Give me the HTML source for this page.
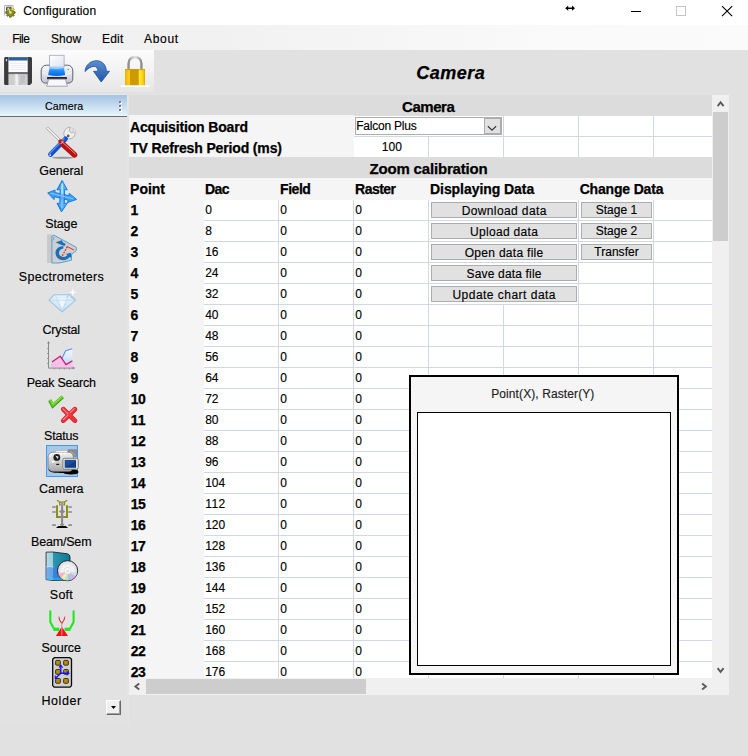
<!DOCTYPE html>
<html lang="en"><head><meta charset="utf-8"><title>Configuration</title>
<style>
html,body{margin:0;padding:0;}
body{width:748px;height:756px;overflow:hidden;background:#e1e1e1;position:relative;font-family:"Liberation Sans",sans-serif;color:#000;}
.r{position:absolute;}
.t{position:absolute;white-space:pre;line-height:1;}
svg{display:block;overflow:visible;}
</style></head><body>
<div class="r" style="left:0px;top:0px;width:748px;height:25px;background:#fff;"></div>
<svg class="r" style="left:3px;top:3px" width="16" height="16" viewBox="0 0 16 16"><path d="M1.500 12.500v-10h8.500v4" fill="#fafafa" stroke="#b4b4b4" stroke-width="1"/><path d="M3.500 7.500v-3.300h5" fill="none" stroke="#4a4a4a" stroke-width="1"/><path d="M12.14 8.74L12.14 10.26L10.76 10.47L10.46 11.19L11.29 12.31L10.21 13.39L9.09 12.56L8.37 12.86L8.16 14.24L6.64 14.24L6.43 12.86L5.71 12.56L4.59 13.39L3.51 12.31L4.34 11.19L4.04 10.47L2.66 10.26L2.66 8.74L4.04 8.53L4.34 7.81L3.51 6.69L4.59 5.61L5.71 6.44L6.43 6.14L6.64 4.76L8.16 4.76L8.37 6.14L9.09 6.44L10.21 5.61L11.29 6.69L10.46 7.81L10.76 8.53z" fill="#8d8d10" stroke="#3a3a06" stroke-width=".6"/><circle cx="7.400" cy="9.500" r="1.400" fill="#d4d4c8"/><path d="M8.500 5.800l2.500 1.300" stroke="#e8e81e" stroke-width="1.600"/><path d="M4 7.200l2.500-.9v2.700" stroke="#d6d6b8" stroke-width=".9" fill="none"/></svg>
<span class="t" style="left:23.30px;top:5px;font-size:12px;letter-spacing:0.117px;-webkit-text-stroke:0.15px #000;">Configuration</span>
<svg class="r" style="left:560px;top:0px" width="188" height="25" viewBox="560 0 188 25">
<path d="M565.200 8.200l3-2.600v1.900h3.800v-1.900l3 2.600-3 2.600v-1.900h-3.800v1.900z" fill="#000"/>
<path d="M631 11.500h10" stroke="#000" stroke-width="1"/>
<rect x="676.500" y="6.500" width="9" height="9" fill="none" stroke="#c4c4c4" stroke-width="1"/>
<path d="M722 6.200l10.200 10M732.200 6.200l-10.200 10" stroke="#000" stroke-width="1.100" fill="none"/>
</svg>
<div class="r" style="left:0px;top:25px;width:748px;height:25px;background:linear-gradient(90deg,#f0f0f0 0%,#f1f1f1 28%,#f9f9f9 70%,#fbfbfb 100%);"></div>
<span class="t" style="left:12.20px;top:33px;font-size:12px;letter-spacing:-0.573px;-webkit-text-stroke:0.15px #000;">File</span>
<span class="t" style="left:50.90px;top:33px;font-size:12px;letter-spacing:0.127px;-webkit-text-stroke:0.15px #000;">Show</span>
<span class="t" style="left:102.00px;top:33px;font-size:12px;letter-spacing:0.213px;-webkit-text-stroke:0.15px #000;">Edit</span>
<span class="t" style="left:144.00px;top:33px;font-size:12px;letter-spacing:0.690px;-webkit-text-stroke:0.15px #000;">About</span>
<div class="r" style="left:0px;top:50px;width:154px;height:42px;background:linear-gradient(180deg,#fcfcfc 0%,#f3f3f3 45%,#e6e6e6 100%);"></div>
<div class="r" style="left:0px;top:94px;width:127px;height:1px;background:#e9e9e9;"></div>
<svg class="r" style="left:0px;top:50px" width="154" height="41" viewBox="0 50 154 41">
<defs>
<linearGradient id="gsh" x1="0" y1="0" x2="1" y2="0"><stop offset="0" stop-color="#d6d6d8"/><stop offset=".45" stop-color="#f6f6fa"/><stop offset="1" stop-color="#a9adb8"/></linearGradient>
<linearGradient id="gpb" x1="0" y1="0" x2="0" y2="1"><stop offset="0" stop-color="#f7f7fb"/><stop offset=".5" stop-color="#e3e3ec"/><stop offset="1" stop-color="#bfc1d0"/></linearGradient>
<linearGradient id="gpbl" x1="0" y1="0" x2="0" y2="1"><stop offset="0" stop-color="#7cc6ff"/><stop offset=".45" stop-color="#1f8cf8"/><stop offset="1" stop-color="#0464ea"/></linearGradient>
<linearGradient id="gpp" x1="0" y1="0" x2="1" y2="1"><stop offset="0" stop-color="#ffffff"/><stop offset="1" stop-color="#dfe2ec"/></linearGradient>
<linearGradient id="gar" x1="0" y1="0" x2="0" y2="1"><stop offset="0" stop-color="#5a8fd0"/><stop offset="1" stop-color="#1f56a8"/></linearGradient>
<linearGradient id="glk" x1="0" y1="0" x2="1" y2="0"><stop offset="0" stop-color="#e8b400"/><stop offset=".22" stop-color="#ffd21a"/><stop offset=".26" stop-color="#cf9a00"/><stop offset=".66" stop-color="#cf9a00"/><stop offset=".72" stop-color="#ffe84a"/><stop offset=".9" stop-color="#ffd000"/><stop offset="1" stop-color="#d8a400"/></linearGradient>
<linearGradient id="gshk" x1="0" y1="0" x2="1" y2="0"><stop offset="0" stop-color="#8e8e8e"/><stop offset=".5" stop-color="#e4e4e4"/><stop offset="1" stop-color="#8e8e8e"/></linearGradient>
</defs>
<!-- floppy -->
<path d="M5.600 57.100h24.900q1.500 0 1.500 1.500v24.400l-2 2h-24.400q-1.500 0-1.500-1.500v-24.900q0-1.500 1.500-1.500z" fill="#3b3b3e"/>
<rect x="8.400" y="57.200" width="19.300" height="15.100" fill="#fcfcfe"/>
<rect x="8.400" y="57.200" width="19.300" height="3.300" fill="#2d5f9d"/>
<path d="M10.200 63.400h15.700M10.200 65.500h15.700M10.200 67.500h15.700M10.200 69.500h15.700" stroke="#e6e9f2" stroke-width=".8"/>
<rect x="8.400" y="72.300" width="19.300" height="1.800" fill="#707072"/>
<rect x="8.400" y="74.100" width="19.300" height="10.900" fill="#cecece"/>
<path d="M14.300 74.100h3.200l3 10.900h-6.200z" fill="url(#gsh)"/>
<rect x="20.400" y="75.300" width="4.500" height="8.200" fill="#c0c0c2"/>
<rect x="5.800" y="59" width="1.300" height="2.200" rx=".5" fill="#dcdcdc"/>
<!-- printer -->
<path d="M46.500 65.200h21c3.500 0 5.300 2.700 5.300 5.700v7.500c0 2.800-1.600 4.700-4.200 4.700h-23.200c-2.600 0-4.200-1.900-4.200-4.700v-7.500c0-3 1.800-5.700 5.300-5.700z" fill="url(#gpb)" stroke="#5f6172" stroke-width="1"/>
<path d="M42 72.500c4 1.800 9 2.700 15 2.700s11-.9 15-2.700" fill="none" stroke="#fff" stroke-width=".8" opacity=".7"/>
<rect x="49.600" y="55.300" width="14.500" height="12" fill="url(#gpp)" stroke="#a3a7ba" stroke-width=".8"/>
<path d="M49.800 66.800h14l1.400 8.200c-5.500 1.300-11.500 1.300-17.100 0z" fill="url(#gpbl)"/>
<path d="M49.500 68c4.500 1.500 10 1.500 14.600-.2l.2-1h-14.500z" fill="#c6e8ff" opacity=".55"/>
<rect x="47" y="77" width="19.900" height="2.300" rx=".6" fill="#26262a"/>
<path d="M48.600 79.200h16.900l1.900 7h-20.700z" fill="#f8f8fb" stroke="#8e91a0" stroke-width=".8"/>
<rect x="67.400" y="68.800" width="1.500" height="1.200" fill="#2cc46a"/>
<!-- redo arrow -->
<path d="M85 71.500c.5-6.500 5.500-10.800 11.500-10.800 6 0 9.800 4.500 9.800 10.600h3.200l-8.300 10.700-7.700-10.700h4.400c0-3-1.500-4.900-3.800-4.900-2.600 0-6 1.800-9.100 5.100z" fill="url(#gar)" stroke="#1d4f9c" stroke-width=".8"/>
<!-- lock -->
<path d="M120.500 86.200h29.300" stroke="#fff" stroke-width="1.600"/>
<path d="M128.600 70v-6.300c0-4 2.700-6.500 6.400-6.500s6.400 2.500 6.400 6.500v6.300" fill="none" stroke="url(#gshk)" stroke-width="2.500"/>
<rect x="125" y="69.200" width="20" height="16" fill="url(#glk)"/>
<rect x="125" y="69.200" width="20" height="1" fill="#b98a00" opacity=".6"/>
</svg>
<span class="t" style="left:416.20px;top:64px;font-size:18px;letter-spacing:0.488px;font-weight:bold;font-style:italic;-webkit-text-stroke:0.25px #000;">Camera</span>
<div class="r" style="left:0px;top:95px;width:127px;height:630px;background:#e2e2e2;"></div>
<div class="r" style="left:127px;top:95px;width:2px;height:630px;background:#e4e4e4;"></div>
<div class="r" style="left:0px;top:95px;width:127px;height:21px;background:linear-gradient(180deg,#a3c2e3 0%,#c6dcef 50%,#e6f6fc 100%);"></div>
<div class="r" style="left:0px;top:116px;width:127px;height:1px;background:#6e6e6e;"></div>
<span class="t" style="left:45.10px;top:101px;font-size:10.6px;letter-spacing:0.093px;-webkit-text-stroke:0.15px #000;">Camera</span>
<div class="r" style="left:120px;top:102px;width:2px;height:2px;background:#fff;"></div>
<div class="r" style="left:119px;top:101px;width:2px;height:2px;background:#808080;"></div>
<div class="r" style="left:120px;top:106px;width:2px;height:2px;background:#fff;"></div>
<div class="r" style="left:119px;top:105px;width:2px;height:2px;background:#808080;"></div>
<div class="r" style="left:120px;top:110px;width:2px;height:2px;background:#fff;"></div>
<div class="r" style="left:119px;top:109px;width:2px;height:2px;background:#808080;"></div>
<span class="t" style="left:39.35px;top:165px;font-size:12.5px;letter-spacing:-0.100px;-webkit-text-stroke:0.15px #000;">General</span>
<span class="t" style="left:45.30px;top:218px;font-size:12.5px;letter-spacing:-0.156px;-webkit-text-stroke:0.15px #000;">Stage</span>
<span class="t" style="left:18.80px;top:271px;font-size:12.5px;letter-spacing:0.312px;-webkit-text-stroke:0.15px #000;">Spectrometers</span>
<span class="t" style="left:42.50px;top:324px;font-size:12.5px;letter-spacing:-0.212px;-webkit-text-stroke:0.15px #000;">Crystal</span>
<span class="t" style="left:26.65px;top:377px;font-size:12.5px;letter-spacing:-0.233px;-webkit-text-stroke:0.15px #000;">Peak Search</span>
<span class="t" style="left:44.05px;top:430px;font-size:12.5px;letter-spacing:-0.175px;-webkit-text-stroke:0.15px #000;">Status</span>
<span class="t" style="left:39.05px;top:483px;font-size:12.5px;-webkit-text-stroke:0.15px #000;">Camera</span>
<span class="t" style="left:31.00px;top:536px;font-size:12.5px;letter-spacing:-0.182px;-webkit-text-stroke:0.15px #000;">Beam/Sem</span>
<span class="t" style="left:49.85px;top:589px;font-size:12.5px;letter-spacing:0.217px;-webkit-text-stroke:0.15px #000;">Soft</span>
<span class="t" style="left:41.55px;top:642px;font-size:12.5px;letter-spacing:-0.025px;-webkit-text-stroke:0.15px #000;">Source</span>
<span class="t" style="left:41.45px;top:695px;font-size:12.5px;letter-spacing:0.565px;-webkit-text-stroke:0.15px #000;">Holder</span>
<div class="r" style="left:46px;top:445px;width:32px;height:32px;background:#a9c6e4;border:1px solid #3b9bff;box-sizing:border-box;"></div>
<svg class="r" style="left:40px;top:120px" width="48" height="580" viewBox="40 120 48 580">
<defs>
<linearGradient id="s1" x1="0" y1="0" x2="1" y2="1"><stop offset="0" stop-color="#6cb6ff"/><stop offset="1" stop-color="#0a63d8"/></linearGradient>
<linearGradient id="sbx" x1="0" y1="0" x2="1" y2="0"><stop offset="0" stop-color="#9fd2e0"/><stop offset=".29" stop-color="#7cc0d2"/><stop offset=".3" stop-color="#2f95ae"/><stop offset="1" stop-color="#0c7a96"/></linearGradient>
<linearGradient id="sbx2" x1="0" y1="0" x2="1" y2="0"><stop offset="0" stop-color="#4a98ea"/><stop offset=".3" stop-color="#3b86de"/><stop offset="1" stop-color="#1f62c4"/></linearGradient>
<radialGradient id="scd" cx=".5" cy=".5" r=".5"><stop offset="0" stop-color="#ffffff"/><stop offset=".6" stop-color="#f1eff2"/><stop offset="1" stop-color="#d6dae2"/></radialGradient>
<linearGradient id="scam" x1="0" y1="0" x2="0" y2="1"><stop offset="0" stop-color="#f2f2f2"/><stop offset="1" stop-color="#a9a9a9"/></linearGradient>
<linearGradient id="sdia" x1="0" y1="0" x2="0" y2="1"><stop offset="0" stop-color="#e6f1fa"/><stop offset="1" stop-color="#c9e0f3"/></linearGradient>
<linearGradient id="spk" x1="0" y1="0" x2="0" y2="1"><stop offset="0" stop-color="#f6f9ff"/><stop offset=".45" stop-color="#dbe8fd"/><stop offset="1" stop-color="#a9ccf9"/></linearGradient>
</defs>
<g transform="translate(0.2,0.6)">
<ellipse cx="62.500" cy="157.200" rx="10.500" ry="1" fill="#7d7d7d" opacity=".75"/>
<path d="M66.200 137.800c-2.400-1.500-3.300-4.600-2-7.400 1.100-2.400 3.500-3.900 6-3.800l-1.300 3.600 2.300 2 3.500-1.700c.6 2 .1 4.300-1.400 5.900-1.800 2-4.700 2.500-7.100 1.400z" fill="#eeeeee" stroke="#a2a2a2" stroke-width=".8"/>
<path d="M72.600 127.300c1.500.6 2.500 2 2.700 3.500l-2.200 1.900z" fill="#e6e6e6" stroke="#b9b9b9" stroke-width=".5"/>
<circle cx="68" cy="135.300" r="1.300" fill="#5a5a5a"/>
<path d="M50.300 153.900l15-15.700" stroke="#1252cc" stroke-width="4.800" stroke-linecap="round"/>
<path d="M49.600 152.800l14.300-14.900" stroke="#5d97ee" stroke-width="1.300" stroke-linecap="round"/>
<circle cx="50" cy="154.500" r=".9" fill="#e8f0ff"/>
<path d="M47.300 127.700l12.800 12.500" stroke="#9a9a9a" stroke-width="2.600" stroke-linecap="round"/><path d="M47.300 127.700l12.800 12.500" stroke="#fbfbfb" stroke-width="1.500" stroke-linecap="round"/>
<path d="M60.200 140.800l2.800 2.600" stroke="#c81818" stroke-width="4.200" stroke-linecap="round"/>
<path d="M63 144l11.300 10.200" stroke="#b81212" stroke-width="5.600" stroke-linecap="round"/>
<path d="M61.500 141l13.700 12.300" stroke="#f4a0a0" stroke-width=".9" stroke-linecap="round"/>
<path d="M60.600 143.300l2.700-3" stroke="#f6dada" stroke-width="1" />
</g>
<path d="M47.700 192.900l7.400-2.900-.2 2.500 14.200 3.200.100-2.400 7.400 6.100-9 3.200.5-2.500-13.700-3.400-.3 2.900z" fill="#3d9bf0" stroke="#1380e6" stroke-width="1" stroke-linejoin="round"/>
<path d="M62.100 180.400l5.200 9.500-2.700-.3-.3 13.800 3-.2-5.800 8.700-4.500-8.700 2.800.2.400-13.800-3.200.3z" fill="#52aaf4" stroke="#1380e6" stroke-width="1" stroke-linejoin="round"/>
<path d="M62.200 184v9.500" stroke="#b5defa" stroke-width="2" stroke-linecap="round"/><path d="M61.900 200v7.500" stroke="#8cc8f8" stroke-width="1.200" stroke-linecap="round"/>
<path d="M51 193.300l22 5.400" stroke="#8cc8f8" stroke-width="1.100" stroke-linecap="round"/>
<path d="M57 190l4.500-7.500M57.500 203.500l3.500 6" stroke="#1278e0" stroke-width=".8"/>
<path d="M47.100 234.400h4.800v28.600h-4.800z" fill="#c9c9c9"/>
<path d="M51.900 236.200l1.800-1.200 22.600 12.300v3.300l-4.800 4v5.600l-12.200 2.800h-7.400z" fill="#cfcfcf" stroke="#5a9fd0" stroke-width="1"/>
<path d="M52.300 240.500c1.300-.4 1.800-1.500 1.500-3.500" fill="none" stroke="#5a9fd0" stroke-width=".9"/>
<path d="M55.600 242.300l6.200-2 1.200 2.300 2.800 1.500-1.400 1.900-3.600-1.300z" fill="#1670bc"/>
<path d="M63.500 246.300c-4.600-.6-8 2.600-8 6.600 0 4.200 3.500 7.300 7.800 7.300 2.700 0 5-1.200 6.300-3.200l1.400 1.100.200-5.300-5.300 1.200 1.600 1.100c-.9 1.200-2.300 1.900-4 1.900-2.600 0-4.500-1.800-4.500-4.300 0-2.300 1.800-4 4.200-4.300z" fill="#1670bc"/>
<path d="M67.300 246.600l-6.800 12.800" stroke="#e41a1a" stroke-width="1.100" stroke-dasharray="1.800 1.100"/><path d="M67.300 246.600l6.700 3.500" stroke="#e41a1a" stroke-width=".9"/>
<path d="M49 300.100l5-5.300h16.200l5.400 5.300-13.500 11.800z" fill="url(#sdia)" stroke="#9cc3e6" stroke-width="1.100" stroke-linejoin="round"/>
<path d="M57 298.500l5.200 11 4.600-11z" fill="#f3f9fd" opacity=".8"/>
<path d="M50.500 300.200h23.500M55.500 295.500l2.300 4.700 4.300 10.500 4.300-10.500 2.500-4.700" fill="none" stroke="#b9d6ee" stroke-width=".7"/>
<path d="M66.500 297.500l3.500-4M70 296.500l4.500 3.200" stroke="#a5c6e6" stroke-width="1"/>
<path d="M72.700 288.300l.9 3.200 3.400.8-3.400.9-.9 3.300-.9-3.300-3.300-.9 3.300-.8z" fill="#fff" opacity=".9"/>
<path d="M51.600 364.900l8.900-1.900 1.600-4.900 3.600-7.300 6.600-2v19.300h-20.700z" fill="url(#spk)"/>
<path d="M51.600 364.900l8.900-1.900 1.600-4.900 3.600-7.300 6.600-2" fill="none" stroke="#5a8ff0" stroke-width="1.100" stroke-linejoin="round"/>
<path d="M51.900 362l8.300-5.800 5.800 8.400 6.400-3.900v7.400h-20.500z" fill="#fbc0ea"/>
<path d="M51.900 364.900l8.600-1.900" stroke="#d9c6f2" stroke-width=".9"/>
<path d="M51.900 362l8.300-5.800 5.800 8.400 6.400-3.900" fill="none" stroke="#c4206c" stroke-width="1.300" stroke-linejoin="round"/>
<path d="M48.500 342.500v25.600h25.500" fill="none" stroke="#8a8a8a" stroke-width="1"/><path d="M48.500 341l-1.500 2.600h3zM75.300 368.100l-2.600-1.500v3z" fill="#8a8a8a"/>
<path d="M47 348.500h1.500M47 353.500h1.500M47 358.500h1.500M47 363.500h1.500M54.300 368.100v1.500M59.500 368.100v1.500M64.400 368.100v1.500M69.500 368.100v1.500" stroke="#8a8a8a" stroke-width=".8"/>
<path d="M49.800 400.300l3 5.600 9.900-8.900" fill="none" stroke="#3f9c12" stroke-width="3.600" stroke-linejoin="miter"/>
<path d="M49.800 399.900l3 5.300 9.800-8.600" fill="none" stroke="#62cc22" stroke-width="2.600" stroke-linejoin="miter"/>
<path d="M51 400.800l2.200 3.600 8.500-7.600" fill="none" stroke="#a4ea6a" stroke-width=".8"/>
<path d="M63.300 409.200l11.600 11.400M74.900 409.200l-11.600 11.400" stroke="#cc1820" stroke-width="4.700" stroke-linecap="round"/>
<path d="M63.300 409l11.500 11.300M74.800 409l-11.500 11.300" stroke="#f0323a" stroke-width="3.700" stroke-linecap="round"/>
<path d="M63 408.900l5 5M74.200 408.600l-4 4M63.500 419.500l4.200-4.200" stroke="#ff8a90" stroke-width="1.100" stroke-linecap="round"/>
<path d="M48.200 469c1 3 4 3.600 8 3.800 3 .2 5 .2 7.500.3 1 1 3 1.300 7 1.300 4 0 7.500-.5 7.800-2.200.2-1.600-1.800-2.600-4.500-2.800z" fill="#000"/>
<path d="M68.200 449.800h8.600v6.600h-8.600z" fill="#8c8c8c" stroke="#767676" stroke-width=".6"/><path d="M70 451l5.500 4.500" stroke="#b5b5b5" stroke-width=".8"/>
<rect x="48.100" y="452.300" width="25.200" height="19" rx="4.500" fill="url(#scam)" stroke="#7f7f7f" stroke-width=".8"/>
<path d="M56.400 450.700h10.400l1.200 1.900h-12.800z" fill="#fbfbfb" stroke="#9a9a9a" stroke-width=".4"/>
<path d="M50 457c0-2.300 1.500-3.600 4-3.600h13" fill="none" stroke="#fff" stroke-width="1.300" opacity=".9"/>
<circle cx="56.800" cy="457.400" r="3.400" fill="#1e1e1e"/><path d="M55.200 455.500l3.400 1.200-.8 2.200z" fill="#f4f4f4"/>
<rect x="56.200" y="463.700" width="3" height="1.400" rx=".5" fill="#1a1a1a"/>
<rect x="51.500" y="461" width="3.500" height="1.500" rx=".7" fill="#fafafa"/>
<rect x="62.900" y="458.300" width="15.400" height="10.800" rx="1.400" fill="#e3e3e3" stroke="#6e6e6e" stroke-width=".8"/><rect x="64.700" y="459.900" width="11.300" height="7.700" fill="#1d4c9a"/><path d="M64.700 467.600l11.300-6.500v6.500z" fill="#143c80"/>
<path d="M57 500.200l3 2h4.200l3-2" fill="none" stroke="#8c8a12" stroke-width="1.300"/><path d="M59.600 502v3.500M64.600 502v3.500" stroke="#8c8a12" stroke-width="1.100"/>
<circle cx="62.100" cy="504.600" r="1.900" fill="#9c9c9c"/>
<path d="M57 505.200v11.800h3.600M67 505.200v11.800h-3.200" fill="none" stroke="#8c8a12" stroke-width="1.900"/>
<path d="M52.200 507h3.600M68.300 507h3.600M52.200 512h3.600M68.300 512h3.600M52.200 525.100h3.600M68.300 525.100h3.600" stroke="#8a8a8a" stroke-width="1.700"/>
<path d="M62.100 506v19.800" stroke="#8a8a8a" stroke-width="2"/><path d="M62.100 509.200l3.200 2.400-3.200 2.400-3.200-2.400z" fill="#8a8a8a"/><path d="M62.100 514.300l3.300 3.600h-6.600z" fill="#8a8a8a"/><ellipse cx="62.100" cy="524.600" rx="2.300" ry=".9" fill="#8a8a8a"/>
<path d="M56 528l2.200-1.900h7.600l2.200 1.900z" fill="#000"/>
<path d="M46.100 552.200l7-.2 14.400 1.800q2.500.7 2.500 3.200v23l-17 .5-6.900-.900z" fill="url(#sbx)" stroke="#101820" stroke-width=".8" stroke-linejoin="round"/>
<path d="M46.500 567c2.500-.6 5-.6 7 0 5-.2 9-1.300 16.100-3.500v16.300l-16.600.4-6.500-.8z" fill="url(#sbx2)"/>
<path d="M46.500 579.300l6.500.8 16.600-.4v-2.200l-16.600.6-6.500-1z" fill="#1eb0e6" opacity=".8"/>
<path d="M46.500 552.600l6.500-.2v27.700l-6.500-.8z" fill="#fff" opacity=".22"/>
<path d="M46.500 567c2.500-.6 5-.6 7 0" stroke="#e8f6fb" stroke-width=".7" fill="none"/>
<circle cx="67.600" cy="570.700" r="10.100" fill="url(#scd)" stroke="#1a1a1a" stroke-width=".9"/>
<path d="M67.600 570.700l-9.300 3.300a10 10 0 0 0 2.600 4.200z" fill="#f4a6b6" opacity=".75"/><path d="M67.600 570.700l-6.700 7.500a10 10 0 0 0 3.800 2.100z" fill="#f3e9a8" opacity=".7"/><path d="M67.600 570.700l-2.900 9.600a10 10 0 0 0 3.600.3z" fill="#a9e2a4" opacity=".7"/><path d="M67.600 570.700l.7 9.900a10 10 0 0 0 3.500-.9z" fill="#8fb6f0" opacity=".8"/><path d="M67.600 570.700l4.200 9a10 10 0 0 0 4-3.400z" fill="#d79ae0" opacity=".75"/><path d="M67.600 570.700l8.200 5.600a10 10 0 0 0 1.500-3.600z" fill="#b9e2e6" opacity=".7"/>
<circle cx="67.600" cy="570.700" r="3.400" fill="#fafafa" stroke="#cfcfcf" stroke-width=".6"/><circle cx="67.600" cy="570.900" r="1.500" fill="#dedede"/>
<path d="M50.300 610.600v11.300l3.500 6.700" fill="none" stroke="#1ee81e" stroke-width="2.100" stroke-linejoin="round"/><path d="M53.300 629.300h6" stroke="#1ee81e" stroke-width="3.200"/>
<path d="M73.600 610.600v11.300l-3.500 6.700" fill="none" stroke="#1ee81e" stroke-width="2.100" stroke-linejoin="round"/><path d="M70.600 629.300h-6" stroke="#1ee81e" stroke-width="3.200"/>
<path d="M55.800 635.900l6-9.200 6.200 9.200z" fill="#f21010"/>
<path d="M58.700 616.200c.2 3 1.200 5.200 3.100 7.200 1.900-2 2.900-4.200 3.100-7.200" fill="none" stroke="#d62a2a" stroke-width="1.100"/><path d="M58.700 616.400v1M64.900 616.400v1" stroke="#fff" stroke-width="1"/><path d="M61.800 623v12.500" stroke="#cf9c9c" stroke-width="1"/>
<path d="M54.300 657.700h15.600l1.600 1.600v26.300l-1.600 1.600h-15.600l-1.600-1.600v-26.300z" fill="#cfcfcf" stroke="#0a0a0a" stroke-width="1.300" stroke-linejoin="round"/>
<rect x="55.6" y="660.4" width="4.800" height="4.800" rx="1" fill="#b48a0a" stroke="#1c1400" stroke-width=".8"/>
<rect x="55.6" y="669.5" width="4.800" height="4.800" rx="1" fill="#b48a0a" stroke="#1c1400" stroke-width=".8"/>
<rect x="55.6" y="678.5" width="4.800" height="4.800" rx="1" fill="#b48a0a" stroke="#1c1400" stroke-width=".8"/>
<rect x="63.6" y="660.4" width="4.800" height="4.800" rx="1" fill="#b48a0a" stroke="#1c1400" stroke-width=".8"/>
<rect x="63.6" y="669.5" width="4.800" height="4.800" rx="1" fill="#b48a0a" stroke="#1c1400" stroke-width=".8"/>
<rect x="63.6" y="678.5" width="4.800" height="4.800" rx="1" fill="#b48a0a" stroke="#1c1400" stroke-width=".8"/>
<path d="M60.800 673.300v-7.500M60.800 673.300h7.500M60.800 673.300l-5 4.600" stroke="#1212ff" stroke-width="1.400" fill="none"/><path d="M59 667.600l1.800-2.400 1.800 2.400M66.600 671.400l2.400 1.900-2.400 1.900M55.300 675.600v2.800h2.800" stroke="#1212ff" stroke-width="1.100" fill="none"/>
</svg>
<div class="r" style="left:106px;top:700px;width:15px;height:15px;background:#f0f0f0;box-sizing:border-box;border-top:1px solid #fff;border-left:1px solid #fff;border-right:1px solid #696969;border-bottom:1px solid #696969;box-shadow:inset -1px -1px 0 #a0a0a0;"></div>
<svg class="r" style="left:111px;top:706px" width="5" height="3"><path d="M0 0h5L2.500 3z" fill="#000"/></svg>
<div class="r" style="left:129px;top:95px;width:600px;height:600px;background:#fff;"></div>
<div class="r" style="left:278px;top:116px;width:1px;height:563px;background:#d0d7e5;"></div>
<div class="r" style="left:353px;top:116px;width:1px;height:563px;background:#d0d7e5;"></div>
<div class="r" style="left:428px;top:137px;width:1px;height:542px;background:#d0d7e5;"></div>
<div class="r" style="left:503px;top:116px;width:1px;height:84px;background:#d0d7e5;"></div>
<div class="r" style="left:503px;top:304px;width:1px;height:375px;background:#d0d7e5;"></div>
<div class="r" style="left:578px;top:116px;width:1px;height:563px;background:#d0d7e5;"></div>
<div class="r" style="left:653px;top:116px;width:1px;height:563px;background:#d0d7e5;"></div>
<div class="r" style="left:354px;top:136px;width:358px;height:1px;background:#d0d7e5;"></div>
<div class="r" style="left:354px;top:157px;width:358px;height:1px;background:#d0d7e5;"></div>
<div class="r" style="left:354px;top:178px;width:358px;height:1px;background:#d0d7e5;"></div>
<div class="r" style="left:354px;top:199px;width:358px;height:1px;background:#d0d7e5;"></div>
<div class="r" style="left:204px;top:220px;width:508px;height:1px;background:#d0d7e5;"></div>
<div class="r" style="left:204px;top:241px;width:508px;height:1px;background:#d0d7e5;"></div>
<div class="r" style="left:204px;top:262px;width:508px;height:1px;background:#d0d7e5;"></div>
<div class="r" style="left:204px;top:283px;width:508px;height:1px;background:#d0d7e5;"></div>
<div class="r" style="left:204px;top:304px;width:508px;height:1px;background:#d0d7e5;"></div>
<div class="r" style="left:204px;top:325px;width:508px;height:1px;background:#d0d7e5;"></div>
<div class="r" style="left:204px;top:346px;width:508px;height:1px;background:#d0d7e5;"></div>
<div class="r" style="left:204px;top:367px;width:508px;height:1px;background:#d0d7e5;"></div>
<div class="r" style="left:204px;top:388px;width:508px;height:1px;background:#d0d7e5;"></div>
<div class="r" style="left:204px;top:409px;width:508px;height:1px;background:#d0d7e5;"></div>
<div class="r" style="left:204px;top:430px;width:508px;height:1px;background:#d0d7e5;"></div>
<div class="r" style="left:204px;top:451px;width:508px;height:1px;background:#d0d7e5;"></div>
<div class="r" style="left:204px;top:472px;width:508px;height:1px;background:#d0d7e5;"></div>
<div class="r" style="left:204px;top:493px;width:508px;height:1px;background:#d0d7e5;"></div>
<div class="r" style="left:204px;top:514px;width:508px;height:1px;background:#d0d7e5;"></div>
<div class="r" style="left:204px;top:535px;width:508px;height:1px;background:#d0d7e5;"></div>
<div class="r" style="left:204px;top:556px;width:508px;height:1px;background:#d0d7e5;"></div>
<div class="r" style="left:204px;top:577px;width:508px;height:1px;background:#d0d7e5;"></div>
<div class="r" style="left:204px;top:598px;width:508px;height:1px;background:#d0d7e5;"></div>
<div class="r" style="left:204px;top:619px;width:508px;height:1px;background:#d0d7e5;"></div>
<div class="r" style="left:204px;top:640px;width:508px;height:1px;background:#d0d7e5;"></div>
<div class="r" style="left:204px;top:661px;width:508px;height:1px;background:#d0d7e5;"></div>
<div class="r" style="left:129px;top:95px;width:583px;height:21px;background:#dcdcdc;"></div>
<div class="r" style="left:129px;top:157px;width:583px;height:21px;background:#dcdcdc;"></div>
<div class="r" style="left:129px;top:115px;width:225px;height:42px;background:#f5f5f5;"></div>
<div class="r" style="left:129px;top:178px;width:583px;height:22px;background:#f5f5f5;"></div>
<div class="r" style="left:129px;top:200px;width:75px;height:479px;background:#f5f5f5;"></div>
<div class="r" style="left:355px;top:117px;width:147px;height:18px;background:#fff;border:1px solid #adadad;box-sizing:border-box;"></div>
<div class="r" style="left:484px;top:118px;width:17px;height:16px;background:#e1e1e1;border:1px solid #adadad;box-sizing:border-box;"></div>
<svg class="r" style="left:487px;top:124.5px" width="10" height="7"><path d="M0.9 1.2l4.100 4 4.100-4" fill="none" stroke="#3a3a3a" stroke-width="1.200"/></svg>
<span class="t" style="left:356.20px;top:120px;font-size:12px;letter-spacing:-0.224px;-webkit-text-stroke:0.15px #000;">Falcon Plus</span>
<span class="t" style="left:381.80px;top:141px;font-size:12px;letter-spacing:0.080px;-webkit-text-stroke:0.15px #000;">100</span>
<span class="t" style="left:402.05px;top:99px;font-size:15px;letter-spacing:-0.460px;font-weight:bold;-webkit-text-stroke:0.25px #000;">Camera</span>
<span class="t" style="left:369.40px;top:161px;font-size:15px;letter-spacing:-0.167px;font-weight:bold;-webkit-text-stroke:0.25px #000;">Zoom calibration</span>
<span class="t" style="left:130.00px;top:120px;font-size:14px;letter-spacing:-0.159px;font-weight:bold;-webkit-text-stroke:0.25px #000;">Acquisition Board</span>
<span class="t" style="left:130.20px;top:141px;font-size:14px;letter-spacing:-0.145px;font-weight:bold;-webkit-text-stroke:0.25px #000;">TV Refresh Period (ms)</span>
<span class="t" style="left:130.10px;top:182px;font-size:14px;letter-spacing:-0.050px;font-weight:bold;-webkit-text-stroke:0.25px #000;">Point</span>
<span class="t" style="left:205.10px;top:182px;font-size:14px;letter-spacing:-0.660px;font-weight:bold;-webkit-text-stroke:0.25px #000;">Dac</span>
<span class="t" style="left:280.10px;top:182px;font-size:14px;letter-spacing:-0.480px;font-weight:bold;-webkit-text-stroke:0.25px #000;">Field</span>
<span class="t" style="left:355.10px;top:182px;font-size:14px;letter-spacing:-0.548px;font-weight:bold;-webkit-text-stroke:0.25px #000;">Raster</span>
<span class="t" style="left:430.00px;top:182px;font-size:14px;letter-spacing:-0.056px;font-weight:bold;-webkit-text-stroke:0.25px #000;">Displaying Data</span>
<span class="t" style="left:579.70px;top:182px;font-size:14px;letter-spacing:-0.182px;font-weight:bold;-webkit-text-stroke:0.25px #000;">Change Data</span>
<span class="t" style="left:130.60px;top:203px;font-size:14px;font-weight:bold;-webkit-text-stroke:0.25px #000;">1</span>
<span class="t" style="left:205.20px;top:204px;font-size:12px;-webkit-text-stroke:0.15px #000;">0</span>
<span class="t" style="left:280.20px;top:204px;font-size:12px;-webkit-text-stroke:0.15px #000;">0</span>
<span class="t" style="left:355.20px;top:204px;font-size:12px;-webkit-text-stroke:0.15px #000;">0</span>
<span class="t" style="left:130.60px;top:224px;font-size:14px;font-weight:bold;-webkit-text-stroke:0.25px #000;">2</span>
<span class="t" style="left:205.20px;top:225px;font-size:12px;-webkit-text-stroke:0.15px #000;">8</span>
<span class="t" style="left:280.20px;top:225px;font-size:12px;-webkit-text-stroke:0.15px #000;">0</span>
<span class="t" style="left:355.20px;top:225px;font-size:12px;-webkit-text-stroke:0.15px #000;">0</span>
<span class="t" style="left:130.60px;top:245px;font-size:14px;font-weight:bold;-webkit-text-stroke:0.25px #000;">3</span>
<span class="t" style="left:205.20px;top:246px;font-size:12px;letter-spacing:-0.220px;-webkit-text-stroke:0.15px #000;">16</span>
<span class="t" style="left:280.20px;top:246px;font-size:12px;-webkit-text-stroke:0.15px #000;">0</span>
<span class="t" style="left:355.20px;top:246px;font-size:12px;-webkit-text-stroke:0.15px #000;">0</span>
<span class="t" style="left:130.60px;top:266px;font-size:14px;font-weight:bold;-webkit-text-stroke:0.25px #000;">4</span>
<span class="t" style="left:205.20px;top:267px;font-size:12px;letter-spacing:-0.220px;-webkit-text-stroke:0.15px #000;">24</span>
<span class="t" style="left:280.20px;top:267px;font-size:12px;-webkit-text-stroke:0.15px #000;">0</span>
<span class="t" style="left:355.20px;top:267px;font-size:12px;-webkit-text-stroke:0.15px #000;">0</span>
<span class="t" style="left:130.60px;top:287px;font-size:14px;font-weight:bold;-webkit-text-stroke:0.25px #000;">5</span>
<span class="t" style="left:205.20px;top:288px;font-size:12px;letter-spacing:-0.220px;-webkit-text-stroke:0.15px #000;">32</span>
<span class="t" style="left:280.20px;top:288px;font-size:12px;-webkit-text-stroke:0.15px #000;">0</span>
<span class="t" style="left:355.20px;top:288px;font-size:12px;-webkit-text-stroke:0.15px #000;">0</span>
<span class="t" style="left:130.60px;top:308px;font-size:14px;font-weight:bold;-webkit-text-stroke:0.25px #000;">6</span>
<span class="t" style="left:205.20px;top:309px;font-size:12px;letter-spacing:-0.220px;-webkit-text-stroke:0.15px #000;">40</span>
<span class="t" style="left:280.20px;top:309px;font-size:12px;-webkit-text-stroke:0.15px #000;">0</span>
<span class="t" style="left:355.20px;top:309px;font-size:12px;-webkit-text-stroke:0.15px #000;">0</span>
<span class="t" style="left:130.60px;top:329px;font-size:14px;font-weight:bold;-webkit-text-stroke:0.25px #000;">7</span>
<span class="t" style="left:205.20px;top:330px;font-size:12px;letter-spacing:-0.220px;-webkit-text-stroke:0.15px #000;">48</span>
<span class="t" style="left:280.20px;top:330px;font-size:12px;-webkit-text-stroke:0.15px #000;">0</span>
<span class="t" style="left:355.20px;top:330px;font-size:12px;-webkit-text-stroke:0.15px #000;">0</span>
<span class="t" style="left:130.60px;top:350px;font-size:14px;font-weight:bold;-webkit-text-stroke:0.25px #000;">8</span>
<span class="t" style="left:205.20px;top:351px;font-size:12px;letter-spacing:-0.220px;-webkit-text-stroke:0.15px #000;">56</span>
<span class="t" style="left:280.20px;top:351px;font-size:12px;-webkit-text-stroke:0.15px #000;">0</span>
<span class="t" style="left:355.20px;top:351px;font-size:12px;-webkit-text-stroke:0.15px #000;">0</span>
<span class="t" style="left:130.60px;top:371px;font-size:14px;font-weight:bold;-webkit-text-stroke:0.25px #000;">9</span>
<span class="t" style="left:205.20px;top:372px;font-size:12px;letter-spacing:-0.220px;-webkit-text-stroke:0.15px #000;">64</span>
<span class="t" style="left:280.20px;top:372px;font-size:12px;-webkit-text-stroke:0.15px #000;">0</span>
<span class="t" style="left:355.20px;top:372px;font-size:12px;-webkit-text-stroke:0.15px #000;">0</span>
<span class="t" style="left:130.70px;top:392px;font-size:14px;letter-spacing:-0.540px;font-weight:bold;-webkit-text-stroke:0.25px #000;">10</span>
<span class="t" style="left:205.20px;top:393px;font-size:12px;letter-spacing:-0.220px;-webkit-text-stroke:0.15px #000;">72</span>
<span class="t" style="left:280.20px;top:393px;font-size:12px;-webkit-text-stroke:0.15px #000;">0</span>
<span class="t" style="left:355.20px;top:393px;font-size:12px;-webkit-text-stroke:0.15px #000;">0</span>
<span class="t" style="left:130.70px;top:413px;font-size:14px;letter-spacing:0.160px;font-weight:bold;-webkit-text-stroke:0.25px #000;">11</span>
<span class="t" style="left:205.20px;top:414px;font-size:12px;letter-spacing:-0.220px;-webkit-text-stroke:0.15px #000;">80</span>
<span class="t" style="left:280.20px;top:414px;font-size:12px;-webkit-text-stroke:0.15px #000;">0</span>
<span class="t" style="left:355.20px;top:414px;font-size:12px;-webkit-text-stroke:0.15px #000;">0</span>
<span class="t" style="left:130.70px;top:434px;font-size:14px;letter-spacing:-0.540px;font-weight:bold;-webkit-text-stroke:0.25px #000;">12</span>
<span class="t" style="left:205.20px;top:435px;font-size:12px;letter-spacing:-0.220px;-webkit-text-stroke:0.15px #000;">88</span>
<span class="t" style="left:280.20px;top:435px;font-size:12px;-webkit-text-stroke:0.15px #000;">0</span>
<span class="t" style="left:355.20px;top:435px;font-size:12px;-webkit-text-stroke:0.15px #000;">0</span>
<span class="t" style="left:130.70px;top:455px;font-size:14px;letter-spacing:-0.540px;font-weight:bold;-webkit-text-stroke:0.25px #000;">13</span>
<span class="t" style="left:205.20px;top:456px;font-size:12px;letter-spacing:-0.220px;-webkit-text-stroke:0.15px #000;">96</span>
<span class="t" style="left:280.20px;top:456px;font-size:12px;-webkit-text-stroke:0.15px #000;">0</span>
<span class="t" style="left:355.20px;top:456px;font-size:12px;-webkit-text-stroke:0.15px #000;">0</span>
<span class="t" style="left:130.70px;top:476px;font-size:14px;letter-spacing:-0.680px;font-weight:bold;-webkit-text-stroke:0.25px #000;">14</span>
<span class="t" style="left:205.20px;top:477px;font-size:12px;letter-spacing:-0.070px;-webkit-text-stroke:0.15px #000;">104</span>
<span class="t" style="left:280.20px;top:477px;font-size:12px;-webkit-text-stroke:0.15px #000;">0</span>
<span class="t" style="left:355.20px;top:477px;font-size:12px;-webkit-text-stroke:0.15px #000;">0</span>
<span class="t" style="left:130.70px;top:497px;font-size:14px;letter-spacing:-0.540px;font-weight:bold;-webkit-text-stroke:0.25px #000;">15</span>
<span class="t" style="left:205.20px;top:498px;font-size:12px;letter-spacing:0.410px;-webkit-text-stroke:0.15px #000;">112</span>
<span class="t" style="left:280.20px;top:498px;font-size:12px;-webkit-text-stroke:0.15px #000;">0</span>
<span class="t" style="left:355.20px;top:498px;font-size:12px;-webkit-text-stroke:0.15px #000;">0</span>
<span class="t" style="left:130.70px;top:518px;font-size:14px;letter-spacing:-0.540px;font-weight:bold;-webkit-text-stroke:0.25px #000;">16</span>
<span class="t" style="left:205.20px;top:519px;font-size:12px;letter-spacing:-0.070px;-webkit-text-stroke:0.15px #000;">120</span>
<span class="t" style="left:280.20px;top:519px;font-size:12px;-webkit-text-stroke:0.15px #000;">0</span>
<span class="t" style="left:355.20px;top:519px;font-size:12px;-webkit-text-stroke:0.15px #000;">0</span>
<span class="t" style="left:130.70px;top:539px;font-size:14px;letter-spacing:-0.540px;font-weight:bold;-webkit-text-stroke:0.25px #000;">17</span>
<span class="t" style="left:205.20px;top:540px;font-size:12px;letter-spacing:-0.070px;-webkit-text-stroke:0.15px #000;">128</span>
<span class="t" style="left:280.20px;top:540px;font-size:12px;-webkit-text-stroke:0.15px #000;">0</span>
<span class="t" style="left:355.20px;top:540px;font-size:12px;-webkit-text-stroke:0.15px #000;">0</span>
<span class="t" style="left:130.70px;top:560px;font-size:14px;letter-spacing:-0.540px;font-weight:bold;-webkit-text-stroke:0.25px #000;">18</span>
<span class="t" style="left:205.20px;top:561px;font-size:12px;letter-spacing:-0.070px;-webkit-text-stroke:0.15px #000;">136</span>
<span class="t" style="left:280.20px;top:561px;font-size:12px;-webkit-text-stroke:0.15px #000;">0</span>
<span class="t" style="left:355.20px;top:561px;font-size:12px;-webkit-text-stroke:0.15px #000;">0</span>
<span class="t" style="left:130.70px;top:581px;font-size:14px;letter-spacing:-0.540px;font-weight:bold;-webkit-text-stroke:0.25px #000;">19</span>
<span class="t" style="left:205.20px;top:582px;font-size:12px;letter-spacing:-0.070px;-webkit-text-stroke:0.15px #000;">144</span>
<span class="t" style="left:280.20px;top:582px;font-size:12px;-webkit-text-stroke:0.15px #000;">0</span>
<span class="t" style="left:355.20px;top:582px;font-size:12px;-webkit-text-stroke:0.15px #000;">0</span>
<span class="t" style="left:130.70px;top:602px;font-size:14px;letter-spacing:-0.540px;font-weight:bold;-webkit-text-stroke:0.25px #000;">20</span>
<span class="t" style="left:205.20px;top:603px;font-size:12px;letter-spacing:-0.070px;-webkit-text-stroke:0.15px #000;">152</span>
<span class="t" style="left:280.20px;top:603px;font-size:12px;-webkit-text-stroke:0.15px #000;">0</span>
<span class="t" style="left:355.20px;top:603px;font-size:12px;-webkit-text-stroke:0.15px #000;">0</span>
<span class="t" style="left:130.70px;top:623px;font-size:14px;letter-spacing:-0.540px;font-weight:bold;-webkit-text-stroke:0.25px #000;">21</span>
<span class="t" style="left:205.20px;top:624px;font-size:12px;letter-spacing:-0.070px;-webkit-text-stroke:0.15px #000;">160</span>
<span class="t" style="left:280.20px;top:624px;font-size:12px;-webkit-text-stroke:0.15px #000;">0</span>
<span class="t" style="left:355.20px;top:624px;font-size:12px;-webkit-text-stroke:0.15px #000;">0</span>
<span class="t" style="left:130.70px;top:644px;font-size:14px;letter-spacing:-0.540px;font-weight:bold;-webkit-text-stroke:0.25px #000;">22</span>
<span class="t" style="left:205.20px;top:645px;font-size:12px;letter-spacing:-0.070px;-webkit-text-stroke:0.15px #000;">168</span>
<span class="t" style="left:280.20px;top:645px;font-size:12px;-webkit-text-stroke:0.15px #000;">0</span>
<span class="t" style="left:355.20px;top:645px;font-size:12px;-webkit-text-stroke:0.15px #000;">0</span>
<span class="t" style="left:130.70px;top:665px;font-size:14px;letter-spacing:-0.540px;font-weight:bold;-webkit-text-stroke:0.25px #000;">23</span>
<span class="t" style="left:205.20px;top:666px;font-size:12px;letter-spacing:-0.070px;-webkit-text-stroke:0.15px #000;">176</span>
<span class="t" style="left:280.20px;top:666px;font-size:12px;-webkit-text-stroke:0.15px #000;">0</span>
<span class="t" style="left:355.20px;top:666px;font-size:12px;-webkit-text-stroke:0.15px #000;">0</span>
<div class="r" style="left:431px;top:202px;width:146px;height:16px;background:#e1e1e1;border:1px solid #adadad;box-sizing:border-box;"></div>
<span class="t" style="left:461.65px;top:205px;font-size:12px;letter-spacing:0.388px;-webkit-text-stroke:0.15px #000;">Download data</span>
<div class="r" style="left:431px;top:223px;width:146px;height:16px;background:#e1e1e1;border:1px solid #adadad;box-sizing:border-box;"></div>
<span class="t" style="left:470.10px;top:226px;font-size:12px;letter-spacing:0.300px;-webkit-text-stroke:0.15px #000;">Upload data</span>
<div class="r" style="left:431px;top:244px;width:146px;height:16px;background:#e1e1e1;border:1px solid #adadad;box-sizing:border-box;"></div>
<span class="t" style="left:464.75px;top:247px;font-size:12px;letter-spacing:0.288px;-webkit-text-stroke:0.15px #000;">Open data file</span>
<div class="r" style="left:431px;top:265px;width:146px;height:16px;background:#e1e1e1;border:1px solid #adadad;box-sizing:border-box;"></div>
<span class="t" style="left:466.55px;top:268px;font-size:12px;letter-spacing:0.168px;-webkit-text-stroke:0.15px #000;">Save data file</span>
<div class="r" style="left:431px;top:286px;width:146px;height:16px;background:#e1e1e1;border:1px solid #adadad;box-sizing:border-box;"></div>
<span class="t" style="left:452.45px;top:289px;font-size:12px;letter-spacing:0.481px;-webkit-text-stroke:0.15px #000;">Update chart data</span>
<div class="r" style="left:581px;top:202px;width:71px;height:16px;background:#e1e1e1;border:1px solid #adadad;box-sizing:border-box;"></div>
<span class="t" style="left:595.75px;top:204px;font-size:12px;letter-spacing:0.017px;-webkit-text-stroke:0.15px #000;">Stage 1</span>
<div class="r" style="left:581px;top:223px;width:71px;height:16px;background:#e1e1e1;border:1px solid #adadad;box-sizing:border-box;"></div>
<span class="t" style="left:595.75px;top:225px;font-size:12px;letter-spacing:0.017px;-webkit-text-stroke:0.15px #000;">Stage 2</span>
<div class="r" style="left:581px;top:244px;width:71px;height:16px;background:#e1e1e1;border:1px solid #adadad;box-sizing:border-box;"></div>
<span class="t" style="left:594.25px;top:246px;font-size:12px;letter-spacing:0.031px;-webkit-text-stroke:0.15px #000;">Transfer</span>
<div class="r" style="left:409px;top:375px;width:270px;height:300px;background:#f5f5f5;border:2px solid #000;box-sizing:border-box;"></div>
<div class="r" style="left:417px;top:412px;width:254px;height:254px;background:#fff;border:1px solid #000;box-sizing:border-box;"></div>
<span class="t" style="left:491.20px;top:388px;font-size:12px;letter-spacing:0.100px;color:#222;-webkit-text-stroke:0.15px #222;">Point(X), Raster(Y)</span>
<div class="r" style="left:712px;top:95px;width:17px;height:600px;background:#f0f0f0;"></div>
<div class="r" style="left:129px;top:678px;width:583px;height:17px;background:#f0f0f0;"></div>
<div class="r" style="left:713px;top:112px;width:15px;height:129px;background:#cdcdcd;"></div>
<div class="r" style="left:146px;top:679px;width:220px;height:15px;background:#cdcdcd;"></div>
<svg class="r" style="left:129px;top:95px" width="600" height="600" viewBox="129 95 600 600"><path d="M717.60 106.10L720.60 102.30L723.60 106.10" fill="none" stroke="#5c5c5c" stroke-width="1.9"/><path d="M717.60 668.10L720.60 671.90L723.60 668.10" fill="none" stroke="#5c5c5c" stroke-width="1.9"/><path d="M139.20 683.40L135.40 686.40L139.20 689.40" fill="none" stroke="#5c5c5c" stroke-width="1.9"/><path d="M702.10 683.40L705.90 686.40L702.10 689.40" fill="none" stroke="#5c5c5c" stroke-width="1.9"/></svg>
</body></html>
